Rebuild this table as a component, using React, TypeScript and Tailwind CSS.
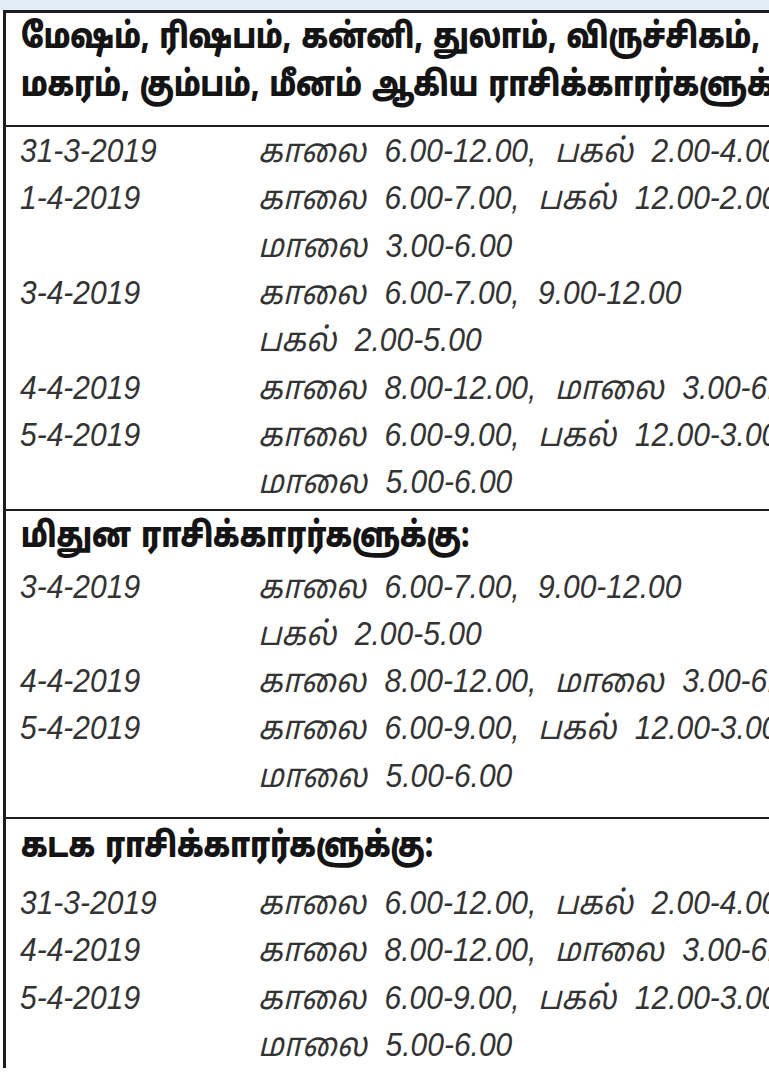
import React from "react";

type Row = { date?: string; text: string };

const sec1: Row[] = [
  { date: "31-3-2019", text: "காலை 6.00-12.00, பகல் 2.00-4.00" },
  { date: "1-4-2019", text: "காலை 6.00-7.00, பகல் 12.00-2.00" },
  { text: "மாலை 3.00-6.00" },
  { date: "3-4-2019", text: "காலை 6.00-7.00, 9.00-12.00" },
  { text: "பகல் 2.00-5.00" },
  { date: "4-4-2019", text: "காலை 8.00-12.00, மாலை 3.00-6.00" },
  { date: "5-4-2019", text: "காலை 6.00-9.00, பகல் 12.00-3.00" },
  { text: "மாலை 5.00-6.00" },
];

const sec2: Row[] = [
  { date: "3-4-2019", text: "காலை 6.00-7.00, 9.00-12.00" },
  { text: "பகல் 2.00-5.00" },
  { date: "4-4-2019", text: "காலை 8.00-12.00, மாலை 3.00-6.00" },
  { date: "5-4-2019", text: "காலை 6.00-9.00, பகல் 12.00-3.00" },
  { text: "மாலை 5.00-6.00" },
];

const sec3: Row[] = [
  { date: "31-3-2019", text: "காலை 6.00-12.00, பகல் 2.00-4.00" },
  { date: "4-4-2019", text: "காலை 8.00-12.00, மாலை 3.00-6.00" },
  { date: "5-4-2019", text: "காலை 6.00-9.00, பகல் 12.00-3.00" },
  { text: "மாலை 5.00-6.00" },
];

function Rows({ rows }: { rows: Row[] }) {
  return (
    <div className="flex flex-col">
      {rows.map((r, i) => (
        <div
          key={i}
          className="flex h-[47.3px] items-center whitespace-nowrap text-[30px] italic text-[#333333] [font-family:'Liberation_Sans','Noto_Sans_Tamil','Noto_Sans',sans-serif]"
        >
          <div className="w-[252px] shrink-0 pl-[14px]">
            <span className="inline-block scale-y-[1.1]">{r.date ?? ""}</span>
          </div>
          <div className="shrink-0 [word-spacing:10px]">
            <span className="inline-block scale-y-[1.1]">{r.text}</span>
          </div>
        </div>
      ))}
    </div>
  );
}

function Heading({ children }: { children: React.ReactNode }) {
  return (
    <div className="flex h-[48px] items-center whitespace-nowrap pl-[15px] text-[27.5px] font-black text-[#141414] [word-spacing:3px] [font-family:'Noto_Sans_Tamil','Noto_Sans','Liberation_Sans',sans-serif]">
      <span className="inline-block scale-y-[1.26]">{children}</span>
    </div>
  );
}

export default function App() {
  return (
    <div className="h-[1080px] w-[769px] overflow-hidden bg-white">
      <div className="h-[10px] bg-[#e3edf6]" />
      <div className="ml-[3px] border-l-[3px] border-t-[3px] border-[#1e1e1e]">
        <div className="pb-[13px] pt-[3px]">
          <Heading>மேஷம், ரிஷபம், கன்னி, துலாம், விருச்சிகம், தனுசு,</Heading>
          <Heading>மகரம், கும்பம், மீனம் ஆகிய ராசிக்காரர்களுக்கு:</Heading>
        </div>
        <div className="border-t-[2.5px] border-[#1e1e1e] pb-[4px]">
          <Rows rows={sec1} />
        </div>
        <div className="border-t-[2.5px] border-[#1e1e1e] pb-[18px]">
          <div className="pt-[3px]">
            <Heading>மிதுன ராசிக்காரர்களுக்கு:</Heading>
          </div>
          <Rows rows={sec2} />
        </div>
        <div className="border-t-[2.5px] border-[#1e1e1e] pt-[6px]">
          <div className="pb-[6px]">
            <Heading>கடக ராசிக்காரர்களுக்கு:</Heading>
          </div>
          <Rows rows={sec3} />
        </div>
      </div>
    </div>
  );
}
